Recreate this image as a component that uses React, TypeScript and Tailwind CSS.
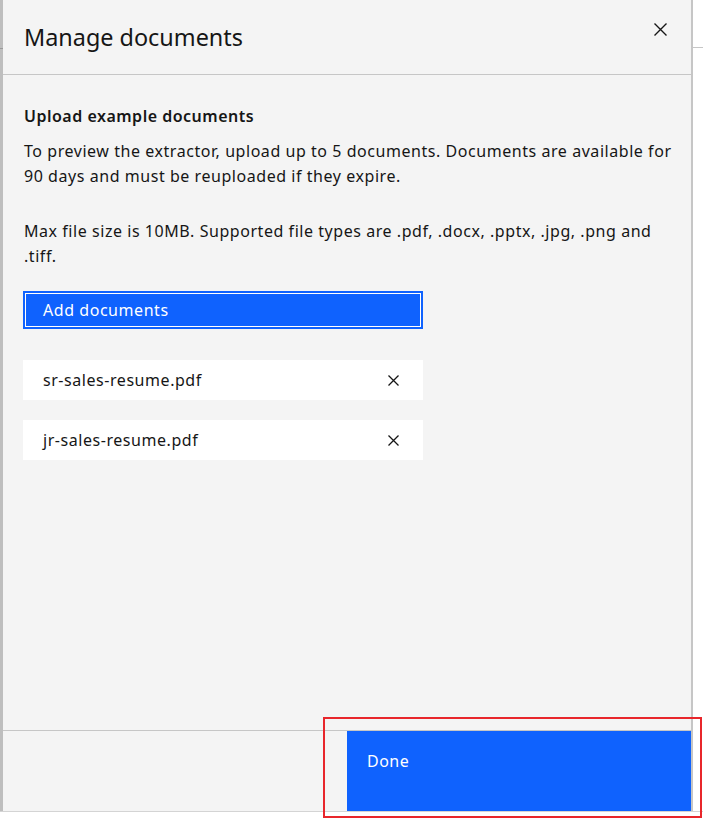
import React from 'react';

const files = ['sr-sales-resume.pdf', 'jr-sales-resume.pdf'];

const CloseIcon: React.FC<{ size: number; stroke?: number }> = ({ size, stroke = 1.4 }) => (
  <svg width={size} height={size} viewBox={`0 0 ${size} ${size}`} fill="none">
    <path d={`M0.5 0.5 L${size - 0.5} ${size - 0.5} M${size - 0.5} 0.5 L0.5 ${size - 0.5}`} stroke="#161616" strokeWidth={stroke} />
  </svg>
);

const App: React.FC = () => {
  return (
    <div className="relative w-full h-[820px] bg-white text-[#161616] font-['Noto_Sans','Open_Sans',sans-serif]">
      <div className="flex h-[812px] border-b border-[#d4d4d4]">
        {/* page behind the overlay */}
        <div className="w-[3px] bg-[#bebebe] flex flex-col">
          <div className="h-[48px]" />
          <div className="h-px bg-[#9a9a9a]" />
        </div>

        <div className="w-[688px] bg-[#f4f4f4] flex flex-col">
          <div className="h-[75px] border-b border-[#c6c6c6] flex items-start justify-between pl-[21px] pr-[24px]">
            <h2 className="pt-[21px] text-[23.4px] leading-[32px] font-normal">Manage documents</h2>
            <button className="mt-[23px]">
              <CloseIcon size={13} />
            </button>
          </div>

          <div className="flex-1 pl-[21px] pr-[10px] pt-[31px] text-[16px] tracking-[0.55px]">
            <h3 className="leading-[20px] font-semibold tracking-[0.5px]">Upload example documents</h3>
            <p className="mt-[13px] leading-[25px] whitespace-nowrap">
              To preview the extractor, upload up to 5 documents. Documents are available for
              <br />
              90 days and must be reuploaded if they expire.
            </p>
            <p className="mt-[30px] leading-[25px] whitespace-nowrap">
              Max file size is 10MB. Supported file types are .pdf, .docx, .pptx, .jpg, .png and
              <br />
              .tiff.
            </p>

            <button className="mt-[22px] ml-[-1px] w-[400px] h-[38px] border-2 border-[#0f62fe] bg-[#0f62fe] text-left">
              <div className="h-full border border-white flex items-center pl-[17px] text-white">
                Add documents
              </div>
            </button>

            <ul className="mt-[31px] ml-[-1px] flex flex-col gap-[20px]">
              {files.map(f => (
                <li key={f} className="w-[400px] h-[40px] bg-white flex items-center justify-between pl-[20px] pr-[24px]">
                  <span>{f}</span>
                  <CloseIcon size={11} stroke={1.3} />
                </li>
              ))}
            </ul>
          </div>

          <div className="h-[81px] border-t border-[#c6c6c6] grid grid-cols-2">
            <div />
            <button className="bg-[#0f62fe] text-white text-left pl-[20px] pt-[20px] flex items-start text-[16px] leading-[20px] tracking-[0.5px]">
              Done
            </button>
          </div>
        </div>

        <div className="flex-1 border-l-2 border-[#c6c6c6] bg-white flex flex-col">
          <div className="h-[47px]" />
          <div className="h-px bg-[#c6c6c6]" />
        </div>
      </div>

      {/* highlight annotation */}
      <div className="absolute left-[323px] top-[717px] w-[379px] h-[101px] border-2 border-[#e8262b] pointer-events-none" />
    </div>
  );
};

export default App;
